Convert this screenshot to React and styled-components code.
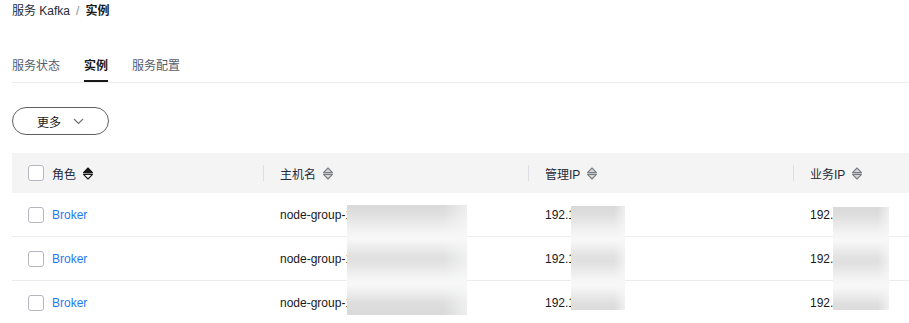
import React from "react";
import styled, { createGlobalStyle } from "styled-components";

const Global = createGlobalStyle`
  html, body { margin: 0; padding: 0; background: #fff; }
  body { font-family: "Liberation Sans", Arial, "Noto Sans CJK SC", sans-serif; font-size: 12px; color: #191919; }
`;

const Page = styled.div`
  padding: 0 0 0 12px;
  overflow: hidden;
  height: 323px;
`;

const Breadcrumb = styled.div`
  display: flex;
  align-items: center;
  height: 22px;
  line-height: 22px;
  gap: 6px;
  color: #252b3a;
`;

const Crumb = styled.span`
  font-weight: ${(p) => (p.$current ? 700 : 400)};
  color: ${(p) => (p.$current ? "#191919" : "#252b3a")};
`;

const Sep = styled.span`
  color: #8a8e99;
`;

const TabBar = styled.div`
  margin-top: 34px;
  display: flex;
  gap: 24px;
  border-bottom: 1px solid #ececec;
`;

const Tab = styled.div`
  line-height: 20px;
  padding-bottom: 4px;
  border-bottom: 2px solid ${(p) => (p.$active ? "#191919" : "transparent")};
  color: ${(p) => (p.$active ? "#191919" : "#575d6c")};
  font-weight: ${(p) => (p.$active ? 700 : 400)};
`;

const MoreButton = styled.button`
  margin-top: 24px;
  width: 97px;
  height: 28px;
  border: 1px solid #5e6064;
  border-radius: 14px;
  background: #fff;
  display: flex;
  align-items: center;
  gap: 12px;
  padding: 0 0 0 24px;
  font-family: inherit;
  font-size: 12px;
  color: #191919;
`;

const Table = styled.div`
  margin-top: 18px;
`;

const Grid = styled.div`
  display: grid;
  grid-template-columns: 251px 265px 265px 1fr;
  align-items: center;
`;

const HeadRow = styled(Grid)`
  height: 40px;
  background: #f4f4f4;
`;

const HeadCell = styled.div`
  position: relative;
  display: flex;
  align-items: center;
  gap: 6px;
  padding-left: ${(p) => (p.$first ? "16px" : "17px")};
  color: #252b3a;
  &::before {
    content: "";
    display: ${(p) => (p.$first ? "none" : "block")};
    position: absolute;
    left: 0;
    top: 50%;
    margin-top: -8px;
    width: 1px;
    height: 16px;
    background: #dcdee3;
  }
`;

const Body = styled.div`
  position: relative;
`;

const Row = styled(Grid)`
  height: 43px;
  border-bottom: 1px solid #ececec;
`;

const Cell = styled.div`
  display: flex;
  align-items: center;
  gap: 6px;
  padding-left: ${(p) => (p.$first ? "16px" : "17px")};
  color: #191919;
`;

const Check = styled.span`
  box-sizing: border-box;
  width: 16px;
  height: 16px;
  border: 1px solid #b4b7bd;
  border-radius: 3px;
  background: #fff;
  margin-right: 2px;
`;

const Link = styled.span`
  color: #1f7af0;
`;

const Blur = styled.div`
  position: absolute;
  left: ${(p) => p.$left}px;
  top: ${(p) => p.$top}px;
  width: ${(p) => p.$w}px;
  height: ${(p) => p.$h}px;
  background:
    linear-gradient(to right, rgba(255,255,255,0) 80%, rgba(246,247,247,0.7) 100%),
    linear-gradient(to bottom,
      #d9d9d9 0px, #dedede 8px, #f3f3f3 26px, #f8f8f8 34px,
      #e2e2e2 50px, #e0e0e0 56px, #f6f6f6 74px, #f8f8f8 80px,
      #dedede 98px, #d9d9d9 110px);
`;

const SortIcon = ({ active }) => (
  <svg width="12" height="13" viewBox="0 0 12 13">
    <path
      d="M1.5 5.6 L6 1 L10.5 5.6 Z"
      fill={active ? "#191919" : "#d6d6d6"}
      stroke={active ? "#191919" : "#7a7d84"}
      strokeWidth="1.1"
      strokeLinejoin="round"
    />
    <path
      d="M1.5 7.4 L6 12 L10.5 7.4 Z"
      fill={active ? "#fff" : "#d6d6d6"}
      stroke={active ? "#191919" : "#7a7d84"}
      strokeWidth="1.1"
      strokeLinejoin="round"
    />
  </svg>
);

const Chevron = () => (
  <svg width="11" height="7" viewBox="0 0 11 7">
    <path d="M1 1 L5.5 5.5 L10 1" fill="none" stroke="#6f7278" strokeWidth="1.2" />
  </svg>
);

const rows = [0, 1, 2];

export default function App() {
  return (
    <>
      <Global />
      <Page>
        <Breadcrumb>
          <Crumb>服务 Kafka</Crumb>
          <Sep>/</Sep>
          <Crumb $current>实例</Crumb>
        </Breadcrumb>
        <TabBar>
          <Tab>服务状态</Tab>
          <Tab $active>实例</Tab>
          <Tab>服务配置</Tab>
        </TabBar>
        <MoreButton>
          更多 <Chevron />
        </MoreButton>
        <Table>
          <HeadRow>
            <HeadCell $first>
              <Check />
              角色 <SortIcon active />
            </HeadCell>
            <HeadCell>
              主机名 <SortIcon />
            </HeadCell>
            <HeadCell>
              管理IP <SortIcon />
            </HeadCell>
            <HeadCell>
              业务IP <SortIcon />
            </HeadCell>
          </HeadRow>
          <Body>
            {rows.map((r) => (
              <Row key={r}>
                <Cell $first>
                  <Check />
                  <Link>Broker</Link>
                </Cell>
                <Cell>node-group-1</Cell>
                <Cell>192.1</Cell>
                <Cell>192.</Cell>
              </Row>
            ))}
            <Blur $left={335} $top={12} $w={120} $h={110} />
            <Blur $left={559} $top={13} $w={54} $h={104} />
            <Blur $left={821} $top={14} $w={56} $h={103} />
          </Body>
        </Table>
      </Page>
    </>
  );
}
